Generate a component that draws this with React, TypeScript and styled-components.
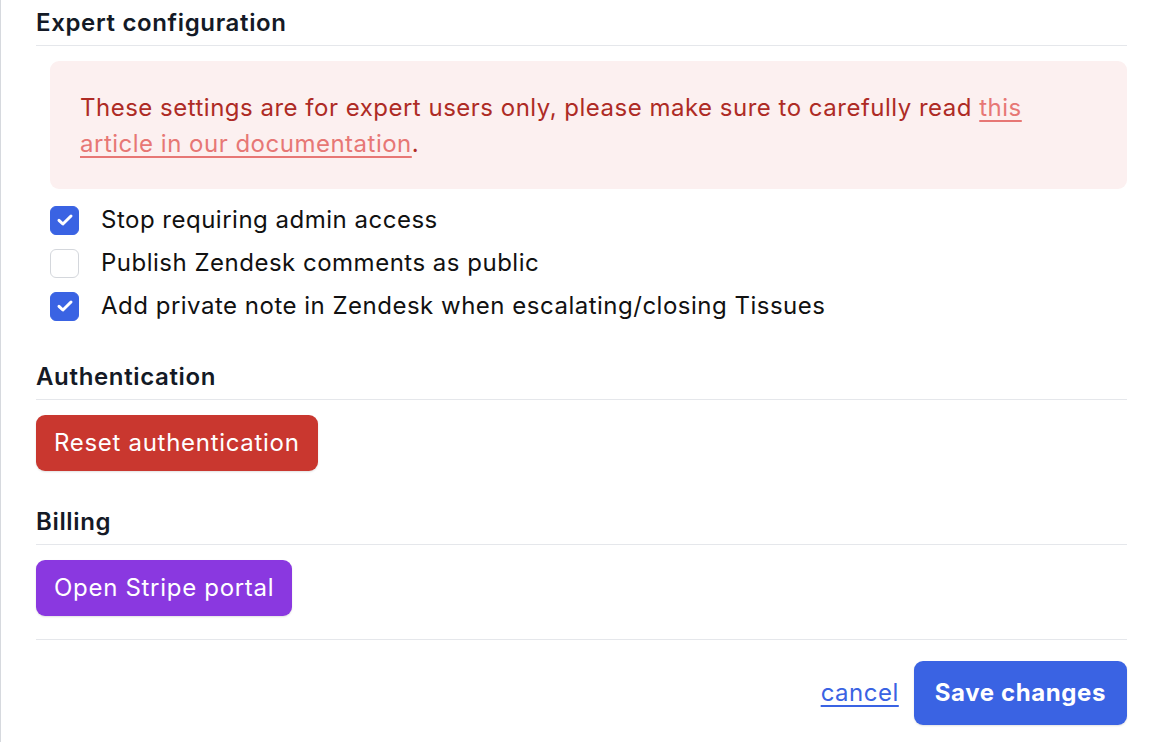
import React, { useState } from "react";
import styled, { createGlobalStyle } from "styled-components";

const Global = createGlobalStyle`
  html, body { margin: 0; padding: 0; background: #ffffff; }
  body { font-family: Inter, "Noto Sans", sans-serif; -webkit-font-smoothing: antialiased; }
  * { box-sizing: border-box; }
`;

const Page = styled.div`
  min-height: 742px;
  border-left: 1px solid #d6d9de;
  padding: 5px 23px 0 35px;
  display: flex;
  flex-direction: column;
  letter-spacing: 0.5px;
`;

const Section = styled.section<{ $top: number }>`
  margin-top: ${(p) => p.$top}px;
  display: flex;
  flex-direction: column;
`;

const Heading = styled.h2`
  margin: 0;
  font-size: 24px;
  line-height: 36px;
  font-weight: 600;
  letter-spacing: 0.65px;
  color: #141a26;
  padding-bottom: 4px;
  border-bottom: 1px solid #e5e7eb;
`;

const Alert = styled.div`
  margin: 15px 0 0 14px;
  padding: 29px 30px 27px;
  background: #fcf0f0;
  border-radius: 9px;
  color: #ae2b25;
  font-size: 24px;
  line-height: 36px;
  a {
    color: #e77775;
    text-decoration: underline;
    text-underline-offset: 4px;
    text-decoration-thickness: 1.5px;
  }
`;

const CheckList = styled.div`
  margin: 13px 0 0 14px;
  display: flex;
  flex-direction: column;
  gap: 7px;
`;

const CheckRow = styled.label`
  display: flex;
  align-items: center;
  gap: 22px;
  font-size: 24px;
  line-height: 36px;
  color: #111111;
  cursor: pointer;
`;

const Box = styled.span<{ $on: boolean }>`
  width: 29px;
  height: 29px;
  border-radius: 6px;
  flex: none;
  display: flex;
  align-items: center;
  justify-content: center;
  background: ${(p) => (p.$on ? "#3a63e3" : "#ffffff")};
  border: 1px solid ${(p) => (p.$on ? "#3a63e3" : "#d4d7dc")};
`;

const Button = styled.button<{ $bg: string; $bold?: boolean; $py: number; $px: number; $top?: number }>`
  align-self: flex-start;
  margin-top: ${(p) => (p.$top ?? 15)}px;
  border: none;
  border-radius: 9px;
  background: ${(p) => p.$bg};
  color: #ffffff;
  font-family: inherit;
  font-size: 24px;
  line-height: 36px;
  letter-spacing: ${(p) => (p.$bold ? "0.6px" : "0.7px")};
  font-weight: ${(p) => (p.$bold ? 700 : 400)};
  padding: ${(p) => `${p.$py}px ${p.$px}px`};
  box-shadow: 0 1px 2px rgba(0, 0, 0, 0.12);
  cursor: pointer;
`;

const Footer = styled.div`
  margin-top: 23px;
  border-top: 1px solid #e5e7eb;
  padding-top: 21px;
  display: flex;
  justify-content: flex-end;
  align-items: center;
  gap: 15px;
`;

const Cancel = styled.a`
  font-size: 24px;
  line-height: 36px;
  color: #3a63e3;
  text-decoration: underline;
  text-underline-offset: 4px;
  text-decoration-thickness: 1.5px;
  cursor: pointer;
`;

const Check = () => (
  <svg width="20" height="20" viewBox="0 0 20 20" fill="none">
    <path d="M4 10.3l3.9 3.7L16 6" stroke="#ffffff" strokeWidth="3" strokeLinecap="round" strokeLinejoin="round" />
  </svg>
);

const items = [
  { label: "Stop requiring admin access", on: true },
  { label: "Publish Zendesk comments as public", on: false },
  { label: "Add private note in Zendesk when escalating/closing Tissues", on: true },
];

export default function App() {
  const [state, setState] = useState(items.map((i) => i.on));
  return (
    <>
      <Global />
      <Page>
        <Section $top={0}>
          <Heading>Expert configuration</Heading>
          <Alert>
            These settings are for expert users only, please make sure to carefully read{" "}
            <a href="#">this article in our documentation</a>.
          </Alert>
          <CheckList>
            {items.map((it, i) => (
              <CheckRow
                key={it.label}
                onClick={() => setState((s) => s.map((v, j) => (j === i ? !v : v)))}
              >
                <Box $on={state[i]}>{state[i] && <Check />}</Box>
                {it.label}
              </CheckRow>
            ))}
          </CheckList>
        </Section>
        <Section $top={35}>
          <Heading>Authentication</Heading>
          <Button $bg="#c9372f" $py={10} $px={18}>Reset authentication</Button>
        </Section>
        <Section $top={33}>
          <Heading>Billing</Heading>
          <Button $bg="#8a38e0" $py={10} $px={18}>Open Stripe portal</Button>
        </Section>
        <Footer>
          <Cancel>cancel</Cancel>
          <Button $bg="#3a63e3" $bold $py={14} $px={21} $top={0}>
            Save changes
          </Button>
        </Footer>
      </Page>
    </>
  );
}
